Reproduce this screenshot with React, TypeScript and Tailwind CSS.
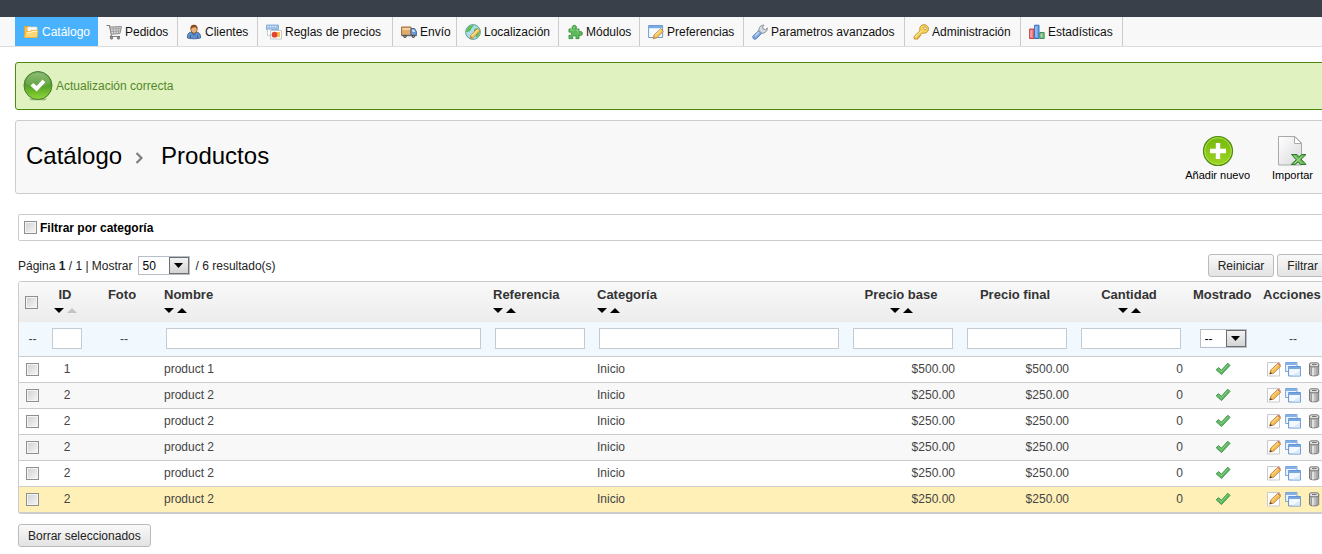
import type { ReactNode } from "react";

function Svg({ children, box = "0 0 16 16", className = "h-4 w-4" }: { children: ReactNode; box?: string; className?: string }) {
  return (
    <svg viewBox={box} className={`block shrink-0 ${className}`} fill="none" aria-hidden="true">
      {children}
    </svg>
  );
}

const FolderIcon = () => (
  <Svg>
    <path d="M1.500 12V2.500h5l1 1.500h6v8z" fill="#f3c057" stroke="#e0a53c" />
    <path d="M4.500 3H14v5H4.500z" fill="#fff" stroke="#d8cfae" strokeWidth=".7" />
    <path d="M1.500 13.500 3 7.500h4l1-1.200h7l-1 7.200z" fill="#fcd873" stroke="#f0b445" strokeWidth=".9" />
    <path d="M4 8.700h4l1-1.200h5" stroke="#fff4cc" />
  </Svg>
);

const CartIcon = () => (
  <Svg>
    <path d="M.5 1.500h3l2 9.500-1 1.500h9.500" stroke="#7f7f7f" strokeWidth="1.100" />
    <path d="M3.800 3 15.500 2.500 14 9.500l-8.700.8z" fill="#dedede" stroke="#858585" strokeWidth=".9" />
    <path d="M4.200 5 15 4.500M4.700 7.500l9.600-.6M7 3l.7 7M10 2.800l.2 7M12.800 2.700l-.4 7" stroke="#8c8c8c" strokeWidth=".7" />
    <circle cx="5.500" cy="14" r="1.200" fill="#999" stroke="#555" strokeWidth=".6" />
    <circle cx="12.500" cy="14" r="1.200" fill="#999" stroke="#555" strokeWidth=".6" />
  </Svg>
);

const UserIcon = () => (
  <Svg>
    <path d="M1.500 14c-.6-3.500 1-5.700 4-6h4.800c3 .3 4.700 2.500 4.200 6-2 1-11 1-13 0z" fill="#5f8fc9" stroke="#3c659b" strokeWidth=".9" />
    <path d="M4.500 14v-2.500M11.500 14v-2.500M5.500 8.500 8 11l2.500-2.500" stroke="#35598a" strokeWidth=".9" />
    <ellipse cx="8" cy="5.200" rx="3.200" ry="4" fill="#e9b27c" stroke="#7c4a22" strokeWidth=".7" />
    <path d="M4.600 5.300C4.200 2 5.500.7 8 .7s3.900 1.500 3.400 4.600C10.500 3.800 9.500 3.200 8 3.400c-1.500 0-2.500.6-3.400 1.900z" fill="#8a4b20" />
  </Svg>
);

const RulesIcon = () => (
  <Svg>
    <path d="M.5 1h12v4.500H.5z" fill="#9fc1e8" stroke="#7ba3d0" strokeWidth=".8" />
    <path d="M1.500 2.500h1M4 2.500h1M6.500 2.500h1M9 2.500h1" stroke="#fff" />
    <path d="M1.500 5.500h4v6h-4z" fill="#fff" stroke="#b4c4d6" strokeWidth=".8" />
    <path d="M4.500 6.500h11v8.500h-11z" fill="#fff" stroke="#b9b9b9" strokeWidth=".8" />
    <path d="M10 8h4v5h-4z" fill="#f9bf4c" />
    <circle cx="8.500" cy="10.700" r="2.900" fill="#e2452f" />
  </Svg>
);

const TruckIcon = () => (
  <Svg>
    <path d="M.6 3h9.400v8.500H.6z" fill="#e3ab6a" stroke="#8d6434" strokeWidth=".9" />
    <path d="M1.200 5h8.300" stroke="#f8dcae" strokeWidth="1.500" />
    <path d="M10 4.500h3.600l1.800 3v4H10z" fill="#6d9bd3" stroke="#3c5f92" strokeWidth=".9" />
    <path d="M11.200 5.700h2l1 2h-3z" fill="#dcecfb" />
    <path d="M.6 10.800h14.800v1.400H.6z" fill="#596577" />
    <circle cx="4" cy="12.300" r="1.600" fill="#444" />
    <circle cx="12.300" cy="12.300" r="1.600" fill="#444" />
    <circle cx="4" cy="12.300" r=".6" fill="#ddd" />
    <circle cx="12.300" cy="12.300" r=".6" fill="#ddd" />
  </Svg>
);

const GlobeIcon = () => (
  <Svg>
    <circle cx="8" cy="8" r="7.400" fill="#a9ddec" stroke="#4f9c8c" strokeWidth=".9" />
    <path d="M2 5.500C3 2.500 6 1 9 1.200 8 3 6.500 3.600 6 5.500 5 7.500 3.500 8 1 8zM10 4.500c2-.6 3.300 0 4.700 1.500.8 3-.7 6-3.200 7.800C10 12 11 10 9.500 8.500 8.500 7 9 5.500 10 4.500z" fill="#63bb55" />
    <path d="m5 14.800.6-3.200 6.700-7 2.600 2.200-6.800 7z" fill="#f6c660" stroke="#b98b35" strokeWidth=".8" />
    <path d="m6.500 12 6.500-6.500" stroke="#fdeebc" />
    <path d="m5 14.800.7-3 2.300 2.100z" fill="#c98f52" />
  </Svg>
);

const PuzzleIcon = () => (
  <Svg>
    <path d="M2 5h3.600c-1-2.300 0-3.700 1.700-3.700S10 2.700 9 5h3v3c2-.9 3.400-.1 3.400 1.500S14 12 12 11v3.600H8.800c.9-1.800.1-2.800-1.500-2.800s-2.200 1.200-1.400 2.800H2v-3.400c1.700.7 2.500 0 2.500-1.500S3.700 7.500 2 8.200z" fill="#5dba5a" stroke="#348b3b" strokeWidth=".9" />
    <path d="M3 6h3.800M7 2.500v2M9 6h2v2.500" stroke="#a3e09b" strokeWidth=".8" />
  </Svg>
);

const PreferencesIcon = () => (
  <Svg>
    <path d="M.6 1.500h14v12H.6z" fill="#f7fbff" stroke="#5b91d0" strokeWidth=".9" />
    <path d="M1 2h13.200v2.200H1z" fill="#79aae2" />
    <path d="m5 14.800 1-3.800 6.700-6.300 2.600 2.600-6.500 6.500z" fill="#f6c95e" stroke="#b98031" strokeWidth=".9" />
    <path d="m7 11.300 6-5.600" stroke="#fdebb2" />
    <path d="m5 14.800.9-3 2.200 2.200z" fill="#d79b62" />
  </Svg>
);

const WrenchIcon = () => (
  <Svg>
    <path d="m7 6.500 2.700 2.700-5.300 5.500c-2.200 1.600-4.700-.8-3.100-3z" fill="#7fa9e3" stroke="#4977b8" strokeWidth=".9" />
    <path d="m3 12 4-4" stroke="#c8dcf7" strokeWidth="1.200" />
    <path d="M7 6.500C6.600 3.300 8.800.8 12 1.200L10.500 3l.8 2 2.200.6L15.300 4c.2 3.200-2.400 5.500-5.600 5.200z" fill="#d6dade" stroke="#7f8890" strokeWidth=".9" />
  </Svg>
);

const KeyIcon = () => (
  <Svg>
    <path d="M7 6.800C5.900 3.500 8 .7 11 .7s5 2.600 4.300 5.300c-.7 2.600-3.500 3.900-6 3l-1.500 1.500v1.300H6.500v1.400H5V15H1.200v-2.700z" fill="#f8d257" stroke="#bd8b25" strokeWidth=".9" />
    <path d="m2 13 6-5.800" stroke="#fdf0b4" />
    <circle cx="12" cy="4.200" r="1.400" fill="#fff" stroke="#b0821f" strokeWidth=".7" />
  </Svg>
);

const StatsIcon = () => (
  <Svg>
    <path d="M.6 5h4.400v9.500H.6z" fill="#f08080" stroke="#c2353c" strokeWidth=".9" />
    <path d="M5.600 1.200H10v13.300H5.600z" fill="#6ba6ee" stroke="#2b62b5" strokeWidth=".9" />
    <path d="M10.800 8.500h4.400v6h-4.400z" fill="#7dc687" stroke="#3b8150" strokeWidth=".9" />
    <path d="M2 6.500V13M7 2.500V13M12.200 10v3" stroke="#fff" strokeOpacity=".5" />
  </Svg>
);

const EditIcon = () => (
  <Svg>
    <path d="M2.500 1.500h12v13.500h-12z" fill="#fff" stroke="#c9c9d2" />
    <path d="m4.800 12.800 1-3.800 6.800-6.500 3 2.800-7 6.900z" fill="#f6be50" stroke="#b47a35" strokeWidth=".8" />
    <path d="m7 9.500 6-5.800" stroke="#fce3a0" />
    <path d="m12.500 2.600 1.200-1.100 2.300 2.600-.8 1.200z" fill="#d9826f" />
    <path d="m4.400 13.400 1-2.700 1.800 1.800z" fill="#5a4a3a" />
  </Svg>
);

const DuplicateIcon = () => (
  <Svg>
    <path d="M.6 1.500h11.400v9H.6z" fill="#eef5fd" stroke="#6d9bd6" strokeWidth=".9" />
    <path d="M1 2h10.600v2H1z" fill="#86b1e8" />
    <path d="M3.600 5.500h12v9.500h-12z" fill="#f4f9ff" stroke="#5489cd" strokeWidth=".9" />
    <path d="M4 6h11.200v2H4z" fill="#78a8e4" />
    <path d="m7 14.500 8-5v5z" fill="#dceafa" />
  </Svg>
);

const TrashIcon = () => (
  <Svg>
    <path d="M4.500 3.500h9.200v10c0 1.800-9.200 1.800-9.200 0z" fill="#bfbfbf" stroke="#6b6b6b" strokeWidth=".9" />
    <path d="M6.300 6.500v7.500M12 6.500v7.500" stroke="#8b8b8b" strokeWidth=".9" />
    <path d="M8 6.500v8" stroke="#f4f4f4" strokeWidth="1.300" />
    <rect x="4.400" y="1.800" width="9.400" height="4" rx="1.800" fill="#dcdcdc" stroke="#696969" strokeWidth=".9" />
    <path d="M7 3.500h4.500" stroke="#777" />
  </Svg>
);

const TickIcon = () => (
  <Svg>
    <path d="M1.200 8.800 3.400 6.600l3 2.600 6.400-7 2.200 2.200-8.500 9.200z" fill="#5cb85e" stroke="#3b9146" strokeWidth=".9" strokeLinejoin="round" />
    <path d="m3.300 8 3 2.900 6.500-7" stroke="#94d88f" strokeWidth=".8" />
  </Svg>
);

const ConfirmIcon = () => (
  <Svg box="0 0 30 30" className="h-[30px] w-[30px]">
    <defs>
      <linearGradient id="confirm" x1="0" y1="0" x2="0" y2="1">
        <stop offset="0" stopColor="#7fb062" />
        <stop offset=".45" stopColor="#4f9a28" />
        <stop offset="1" stopColor="#8fd834" />
      </linearGradient>
    </defs>
    <path d="M6 27.500h18l-2 1.800H8z" fill="#5f8a35" opacity=".6" />
    <circle cx="15" cy="14.500" r="14" fill="url(#confirm)" stroke="#4b7f3a" />
    <path d="M2.500 13C3.500 5.500 9 2 15 2s11.500 3.500 12.500 11c-7 3-18 3-25 0z" fill="#fff" opacity=".15" />
    <path d="m7.500 14.800 2.700-2.700 3.500 3L19.500 8.500l2.800 2.700-8.600 9.300z" fill="#fff" />
  </Svg>
);

const AddIcon = () => (
  <Svg box="0 0 32 32" className="h-8 w-8">
    <defs>
      <linearGradient id="add" x1="0" y1="0" x2="0" y2="1">
        <stop offset="0" stopColor="#74b70c" />
        <stop offset="1" stopColor="#9cd622" />
      </linearGradient>
    </defs>
    <circle cx="16" cy="16" r="14.500" fill="url(#add)" stroke="#4c8a12" strokeWidth="1.200" />
    <circle cx="16" cy="16" r="13.300" stroke="#b5e258" strokeWidth=".9" />
    <path d="M13.800 8h4.400v5.800H24v4.400h-5.800V24h-4.400v-5.800H8v-4.400h5.800z" fill="#fff" />
  </Svg>
);

const ImportIcon = () => (
  <Svg box="0 0 32 32" className="h-8 w-8">
    <defs>
      <linearGradient id="sheet" x1="0" y1="0" x2="1" y2="1">
        <stop offset="0" stopColor="#fff" />
        <stop offset="1" stopColor="#d9d9de" />
      </linearGradient>
    </defs>
    <path d="M1.500 1.500H18L24.500 8v22h-23z" fill="url(#sheet)" stroke="#a9a9a9" />
    <path d="M17.500 1.500v7h7z" fill="#fff" stroke="#a9a9a9" />
    <path d="M14.500 19.500H20l2 2.300 3-2.300h4l-4.800 4.700 4.800 5.300h-5.500l-2.300-2.700-3 2.700h-4l5-4.800z" fill="#61b34f" stroke="#2c7d2b" />
    <path d="m17 20.500 8 8M17.500 28.500l8-7.500" stroke="#c5edb4" strokeWidth=".8" />
  </Svg>
);

const menu = [
  { label: "Catálogo", icon: FolderIcon, width: "w-[83px]" },
  { label: "Pedidos", icon: CartIcon, width: "w-[80px]" },
  { label: "Clientes", icon: UserIcon, width: "w-[80px]" },
  { label: "Reglas de precios", icon: RulesIcon, width: "w-[135px]" },
  { label: "Envío", icon: TruckIcon, width: "w-[64px]" },
  { label: "Localización", icon: GlobeIcon, width: "w-[102px]" },
  { label: "Módulos", icon: PuzzleIcon, width: "w-[81px]" },
  { label: "Preferencias", icon: PreferencesIcon, width: "w-[104px]" },
  { label: "Parametros avanzados", icon: WrenchIcon, width: "w-[161px]" },
  { label: "Administración", icon: KeyIcon, width: "w-[116px]" },
  { label: "Estadísticas", icon: StatsIcon, width: "w-[102px]" },
];

const columns = [
  { title: "ID", width: "w-[44px]", align: "text-center", sort: true, first: true },
  { title: "Foto", width: "w-[70px]", align: "text-center", sort: false },
  { title: "Nombre", width: "", align: "text-left", sort: true },
  { title: "Referencia", width: "w-[104px]", align: "text-left", sort: true },
  { title: "Categoría", width: "w-[254px]", align: "text-left", sort: true },
  { title: "Precio base", width: "w-[114px]", align: "text-center", sort: true },
  { title: "Precio final", width: "w-[114px]", align: "text-center", sort: false },
  { title: "Cantidad", width: "w-[114px]", align: "text-center", sort: true },
  { title: "Mostrado", width: "w-[70px]", align: "text-center", sort: false },
  { title: "Acciones", width: "w-[70px]", align: "text-center", sort: false },
];

const products = [
  { id: 1, name: "product 1", category: "Inicio", price: "$500.00", quantity: 0 },
  { id: 2, name: "product 2", category: "Inicio", price: "$250.00", quantity: 0 },
  { id: 2, name: "product 2", category: "Inicio", price: "$250.00", quantity: 0 },
  { id: 2, name: "product 2", category: "Inicio", price: "$250.00", quantity: 0 },
  { id: 2, name: "product 2", category: "Inicio", price: "$250.00", quantity: 0 },
  { id: 2, name: "product 2", category: "Inicio", price: "$250.00", quantity: 0, selected: true },
];

function Checkbox({ label, id }: { label?: string; id?: string }) {
  return (
    <input
      type="checkbox"
      id={id}
      aria-label={label}
      className="block h-[13px] w-[13px] shrink-0 appearance-none border border-[#8e8f8f] bg-linear-to-br from-[#cfd0d2] to-[#f8f8f8] shadow-[inset_0_0_0_1px_#f4f4f4] checked:bg-[#49b2ff]"
    />
  );
}

function Select({ label, options, className }: { label: string; options: string[]; className: string }) {
  return (
    <span className="relative inline-flex align-middle">
      <select aria-label={label} className={`h-[19px] appearance-none border border-[#b8bec6] bg-white pl-1 text-xs leading-4 text-black ${className}`}>
        {options.map((option) => (
          <option key={option}>{option}</option>
        ))}
      </select>
      <span className="pointer-events-none absolute inset-y-px right-px flex w-5 items-center justify-center border border-[#6e6e6e] bg-linear-to-b from-[#f2f2f2] to-[#d4d4d4]">
        <Svg box="0 0 9 5" className="h-[5px] w-[9px]">
          <path d="M0 0h9L4.500 5z" fill="#000" />
        </Svg>
      </span>
    </span>
  );
}

function Button({ children }: { children: ReactNode }) {
  return (
    <button type="button" className="h-[23px] rounded-[3px] border border-[#bbb] bg-linear-to-b from-[#f9f9f9] to-[#e3e3e3] px-[9px] text-xs text-[#222]">
      {children}
    </button>
  );
}

function SortArrows({ title, first }: { title: string; first?: boolean }) {
  return (
    <span className="inline-flex gap-[3px]">
      <button type="button" aria-label={`${title} descendente`}>
        <Svg box="0 0 10 5" className="h-[5px] w-[10px]">
          <path d="M0 0h10L5 5z" fill="#000" />
        </Svg>
      </button>
      <button type="button" aria-label={`${title} ascendente`}>
        <Svg box="0 0 10 5" className="h-[5px] w-[10px]">
          <path d="M0 5h10L5 0z" fill={first ? "#c4c4c4" : "#000"} />
        </Svg>
      </button>
    </span>
  );
}

function FilterCell({ label }: { label: string }) {
  return (
    <td className="pr-1.5 pl-2">
      <input type="text" aria-label={label} className="block h-[21px] w-full border border-[#c3cbd4] bg-white px-1" />
    </td>
  );
}

export default function App() {
  return (
    <div className="overflow-hidden bg-white font-['Liberation_Sans',Arial,sans-serif] text-xs text-[#222]">
      <header>
        <div className="h-[17px] bg-[#3a404a]" />
        <nav className="flex h-[30px] border-b border-[#ddd] bg-[#f8f8f8] pl-[15px]">
          {menu.map(({ label, icon: Icon, width }, i) => (
            <a
              key={label}
              href="#"
              className={`flex shrink-0 items-center gap-[3px] border-r pt-px pl-2 whitespace-nowrap ${width} ${i === 0 ? "border-[#49b2ff] bg-[#49b2ff] text-white" : "border-[#ccc] text-[#111]"}`}
            >
              <Icon />
              {label}
            </a>
          ))}
        </nav>
      </header>

      <div className="-mr-2 pt-[15px] pl-[15px]">
        <div role="status" className="flex h-12 items-center gap-[3px] rounded-[3px] border border-[#4f8a10] bg-[#dff2bf] pl-[7px] text-[#55862a]">
          <ConfirmIcon />
          Actualización correcta
        </div>

        <div className="mt-2.5 flex h-[74px] items-center justify-between rounded-[3px] border border-[#ccc] bg-[#f8f8f8] pr-4 pl-2.5">
          <h1 className="flex items-center pb-0.5 text-2xl text-black">
            Catálogo
            <Svg box="0 0 8 12" className="mt-1 mr-[18px] ml-[13px] h-3 w-2">
              <path d="m1.500 1 5 5-5 5" stroke="#7d7d7d" strokeWidth="2.200" />
            </Svg>
            Productos
          </h1>
          <div className="flex gap-[22px] pt-1 text-[11px] leading-4 text-black">
            <a href="#" className="flex flex-col items-center">
              <AddIcon />
              Añadir nuevo
            </a>
            <a href="#" className="flex flex-col items-center">
              <ImportIcon />
              Importar
            </a>
          </div>
        </div>
      </div>

      <main className="-mr-1.5 pt-5 pb-[7px] pl-[18px]">
        <div className="flex h-[27px] items-center gap-[3px] rounded-[2px] border border-[#ccc] pl-[5px]">
          <Checkbox id="category-filter" />
          <label htmlFor="category-filter" className="font-bold text-black">
            Filtrar por categoría
          </label>
        </div>

        <div className="mt-[13px] flex h-[23px] items-center justify-between">
          <div className="flex items-center">
            <span>
              Página <b>1</b> / 1 | Mostrar
            </span>
            <span className="mr-1.5 ml-[5px] inline-flex">
              <Select label="Mostrar" options={["50", "20", "100", "300"]} className="w-[52px]" />
            </span>
            / 6 resultado(s)
          </div>
          <div className="flex gap-[3px]">
            <Button>Reiniciar</Button>
            <Button>Filtrar</Button>
          </div>
        </div>

        <div className="mt-1 rounded-[3px] border border-b-2 border-[#ccc]">
          <table className="w-full table-fixed border-collapse text-[#444]">
            <colgroup>
              <col className="w-[25px]" />
              {columns.map((column) => (
                <col key={column.title} className={column.width} />
              ))}
            </colgroup>
            <thead>
              <tr className="h-10 bg-linear-to-b from-[#f9f9f9] to-[#ececec]">
                <th className="pl-1.5">
                  <Checkbox label="Seleccionar todo" />
                </th>
                {columns.map(({ title, align, sort, first }) => (
                  <th key={title} className={`pt-1 pr-2 pl-1.5 align-top text-[13px] leading-[18px] whitespace-nowrap text-[#333] ${align}`}>
                    {title}
                    {sort && (
                      <div className={`leading-[10px] ${align}`}>
                        <SortArrows title={title} first={first} />
                      </div>
                    )}
                  </th>
                ))}
              </tr>
              <tr className="h-[34px] border-b border-[#ccc] bg-[#f1f9ff]">
                <td className="pr-1 pl-1.5 text-center">--</td>
                <FilterCell label="ID" />
                <td className="pr-1 pl-1.5 text-center">--</td>
                <FilterCell label="Nombre" />
                <FilterCell label="Referencia" />
                <FilterCell label="Categoría" />
                <FilterCell label="Precio base" />
                <FilterCell label="Precio final" />
                <FilterCell label="Cantidad" />
                <td className="pr-1 pl-1.5 text-center">
                  <Select label="Mostrado" options={["--", "Sí", "No"]} className="w-[47px]" />
                </td>
                <td className="pr-1 pl-1.5 text-center">--</td>
              </tr>
            </thead>
            <tbody>
              {products.map((product, i) => (
                <tr
                  key={i}
                  className={`h-[26px] border-b border-[#ccc] last:border-b-0 ${product.selected ? "bg-[#fff0b8]" : i % 2 ? "bg-[#f8f8f8]" : "bg-white"}`}
                >
                  <td className="pl-[7px]">
                    <Checkbox label={`Seleccionar ${product.name}`} />
                  </td>
                  <td className="pr-1 pl-1.5 text-center">{product.id}</td>
                  <td />
                  <td className="pr-1 pl-1.5">{product.name}</td>
                  <td />
                  <td className="pr-1 pl-1.5">{product.category}</td>
                  <td className="pr-1 pl-1.5 text-right">{product.price}</td>
                  <td className="pr-1 pl-1.5 text-right">{product.price}</td>
                  <td className="pr-1 pl-1.5 text-right">{product.quantity}</td>
                  <td className="pr-1 pl-1.5">
                    <div className="flex justify-center">
                      <TickIcon />
                    </div>
                  </td>
                  <td className="pr-1 pl-1.5">
                    <div className="flex justify-center gap-1">
                      <a href="#" aria-label="Modificar">
                        <EditIcon />
                      </a>
                      <a href="#" aria-label="Duplicar">
                        <DuplicateIcon />
                      </a>
                      <a href="#" aria-label="Eliminar">
                        <TrashIcon />
                      </a>
                    </div>
                  </td>
                </tr>
              ))}
            </tbody>
          </table>
        </div>

        <div className="mt-2.5 flex">
          <Button>Borrar seleccionados</Button>
        </div>
      </main>
    </div>
  );
}
